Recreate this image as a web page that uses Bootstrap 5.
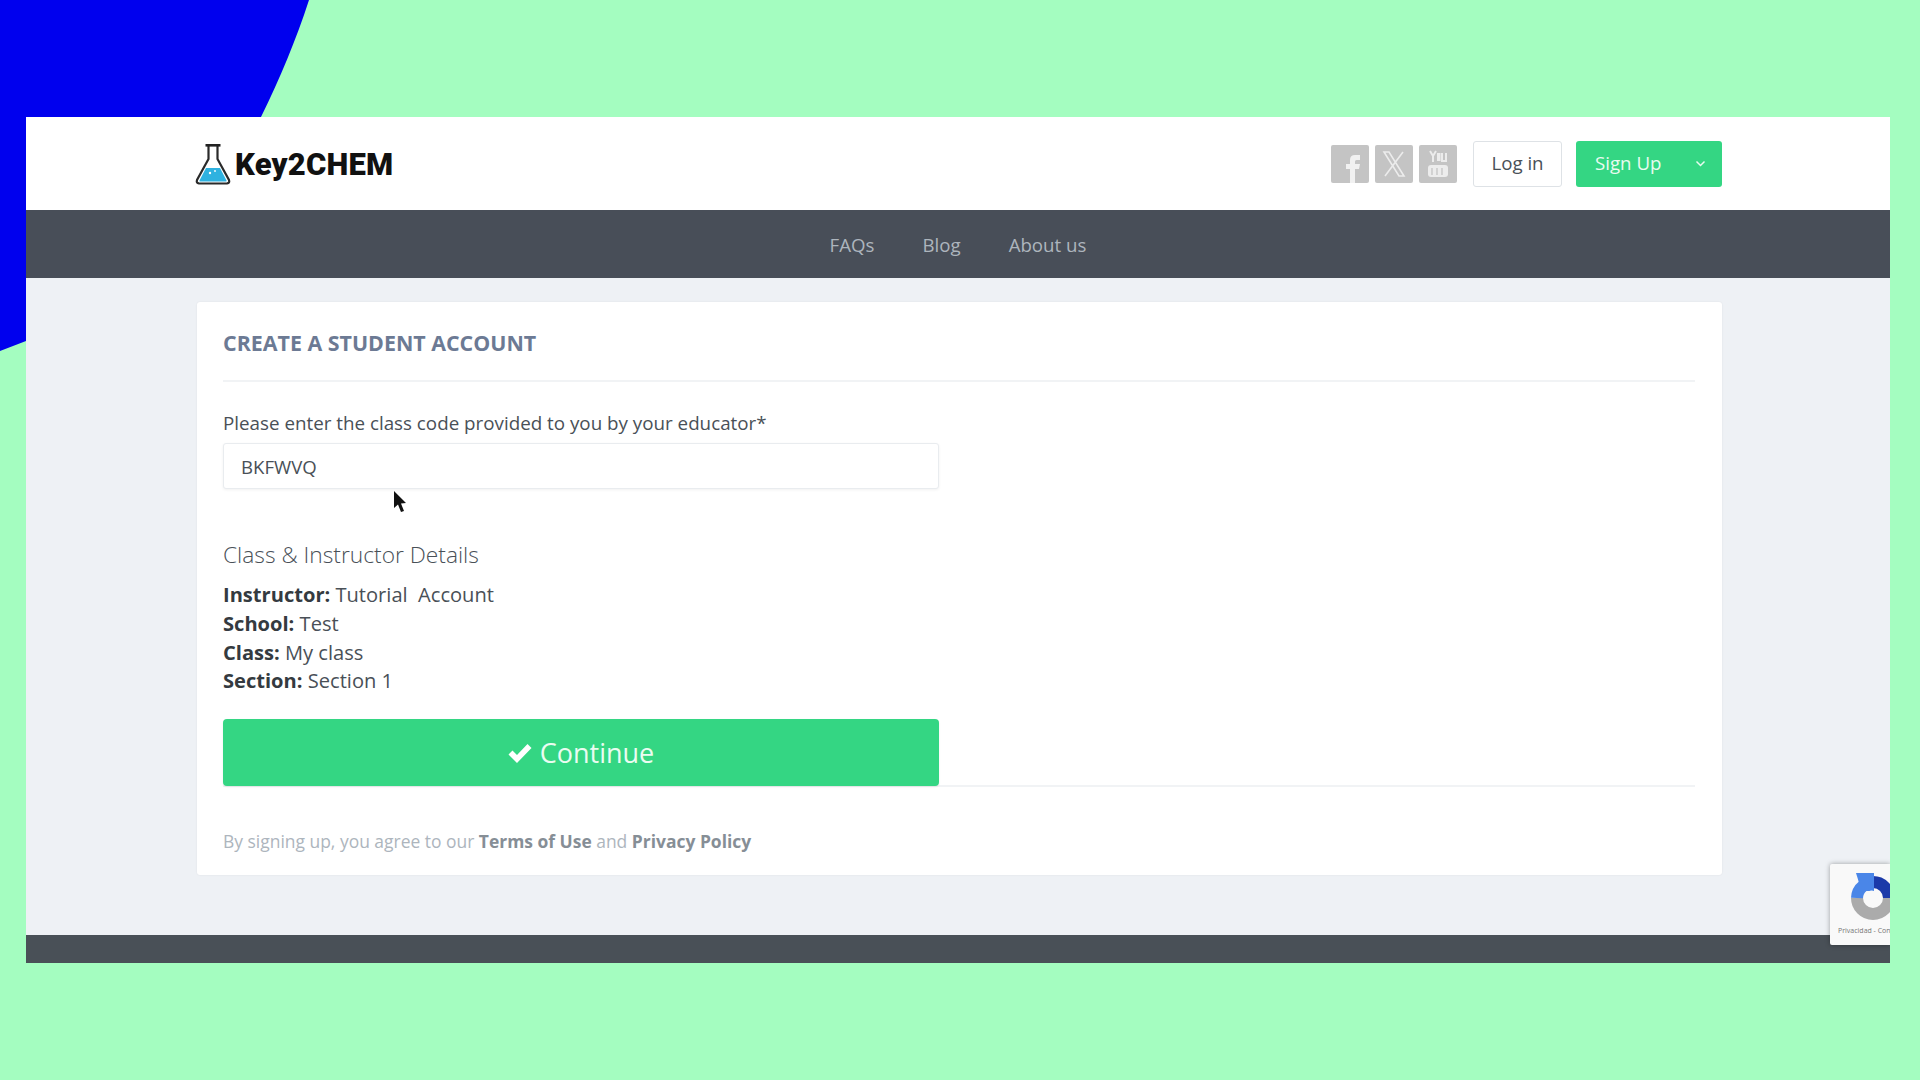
<!DOCTYPE html>
<html lang="en">
<head>
<meta charset="utf-8">
<title>Key2CHEM</title>
<link href="https://cdn.jsdelivr.net/npm/bootstrap@5.3.0/dist/css/bootstrap.min.css" rel="stylesheet">
<style>
html,body{height:100%;}
body{background:#a4fdc0;font-family:"Open Sans","Liberation Sans",sans-serif;color:#495057;overflow:hidden;}
.blue-shape{position:absolute;left:0;top:0;width:320px;height:360px;}
.stage{padding:117px 30px 0 26px;position:relative;}
.app-window{position:relative;height:846px;overflow:hidden;background:#eef1f5;display:flex;flex-direction:column;}
.top-head{height:93px;background:#fff;padding:0 168px 0 169px;}
.brand-name{font-family:Roboto,"Liberation Sans",sans-serif;font-weight:900;font-size:31px;line-height:1;color:#111;letter-spacing:.2px;margin-top:2px;}
.soc-row{gap:6px;margin-right:16px;}
.soc{width:38px;height:38px;background:#c4c4c4;border-radius:2px;display:block;}
.btn-login{height:46px;width:89px;font-size:18.700px;color:#495057;background:#fff;border:1px solid #dee2e6;border-radius:3px;padding:0;}
.btn-sign{height:46px;width:146px;margin-left:14px;font-size:18.700px;background:#34d683;color:#e9fbf0;border:0;border-radius:3px;padding:0 16px 0 19px;}
.top-nav{height:68px;background:#484e58;gap:48px;}
.top-nav a{color:#adb5bd;font-size:18.700px;text-decoration:none;position:relative;top:1px;}
.page-body{flex:1;padding:24px 168px 0 171px;}
.panel{background:#fff;height:573px;padding:0 27px 0 26px;border-radius:3px;box-shadow:0 0 2px rgba(0,0,0,.08);}
.panel-title{font-size:21.400px;font-weight:700;color:#6c7a94;margin:0;height:80px;line-height:82px;border-bottom:2px solid #f1f3f5;}
.field-label{font-size:18.800px;line-height:24px;color:#495057;margin:29px 0 8px;display:block;}
.code-input{width:716px;height:46px;font-size:18.600px;color:#495057;border:1px solid #e9ecef;border-radius:3px;padding:0 17px;box-shadow:0 1px 3px rgba(0,0,0,.06);}
.detail-head{font-size:22.750px;font-weight:300;color:#495057;margin:50px 0 10px;line-height:32px;}
.detail-line{font-size:20.100px;line-height:28.800px;}
.detail-line b{font-weight:700;color:#343a40;}
.form-end{border-bottom:2px solid #f1f3f5;height:68px;margin-top:23px;}
.btn-go{width:716px;height:67px;background:#34d683;color:#eafcf1;border:0;border-radius:4px;font-size:27px;font-weight:400;padding:2px 0 0;box-shadow:0 1px 2px rgba(0,0,0,.08);}
.terms{font-size:17.450px;color:#adb5bd;margin:42px 0 0;line-height:24px;}
.terms b{color:#868e96;font-weight:700;}
.page-foot{height:28px;background:#495057;}
.recaptcha{position:absolute;left:1804px;top:747px;width:60px;height:81px;background:#f9f9f9;box-shadow:0 0 5px rgba(0,0,0,.35);border-radius:2px 0 0 2px;}
.recaptcha span{position:absolute;left:8px;top:61px;font-size:7px;line-height:11px;white-space:nowrap;color:#777;}
.pointer{position:absolute;left:367px;top:374px;width:14px;height:22px;}
</style>
</head>
<body>
<svg class="blue-shape" viewBox="0 0 320 360"><path d="M0 0H309C296 40 280 78 261 117H26V341L0 351Z" fill="#0000ee"/></svg>
<div class="stage">
  <div class="app-window">
    <header class="top-head d-flex align-items-center justify-content-between">
      <div class="d-flex align-items-center gap-1">
        <svg width="36" height="42" viewBox="0 0 36 42">
          <path d="M11 25H25L31.500 37.500Q32 38.500 31 38.500H5Q4 38.500 4.500 37.500Z" fill="#2fb2e0"/>
          <circle cx="15" cy="30" r="1.200" fill="#fff"/><circle cx="20" cy="28" r=".9" fill="#fff"/>
          <path d="M13.500 3V16L2 37Q1 40 4 40.500H32Q35 40 34 37L22.500 16V3" fill="none" stroke="#2a2a2a" stroke-width="2.200"/>
          <rect x="10.500" y="1" width="15" height="2.600" fill="#222"/>
        </svg>
        <span class="brand-name">Key2CHEM</span>
      </div>
      <div class="d-flex align-items-center">
        <div class="d-flex soc-row">
          <svg class="soc" viewBox="0 0 38 38"><path d="M19 38V24H15V19H19V15Q19 10 24 10H29V15H25.500Q24 15 24 16.500V19H29L28 24H24V38Z" fill="#f1f1f1"/></svg>
          <svg class="soc" viewBox="0 0 38 38"><path d="M9 7H14L29 31H24ZM28 7 10 31" fill="none" stroke="#ececec" stroke-width="1.600"/></svg>
          <svg class="soc" viewBox="0 0 38 38"><path d="M11 6 14 11V17M17 6 14 11" fill="none" stroke="#ececec" stroke-width="2"/><rect x="18" y="8" width="3.500" height="8" fill="#ececec"/><path d="M23 8V16H27V8" fill="none" stroke="#ececec" stroke-width="2"/><rect x="9" y="20" width="20" height="12" rx="3" fill="#ececec"/><path d="M13 23V30M18 23V30M23 23V30" stroke="#c4c4c4" stroke-width="1.300"/></svg>
        </div>
        <button class="btn btn-login" type="button">Log in</button>
        <button class="btn btn-sign d-flex align-items-center justify-content-between" type="button">
          <span>Sign Up</span>
          <svg width="11" height="7" viewBox="0 0 11 7"><path d="M1.500 1.500 5.500 5.500 9.500 1.500" fill="none" stroke="#e9fbf0" stroke-width="1.500"/></svg>
        </button>
      </div>
    </header>
    <nav class="top-nav d-flex justify-content-center align-items-center">
      <a href="#">FAQs</a>
      <a href="#">Blog</a>
      <a href="#">About us</a>
    </nav>
    <main class="page-body">
      <section class="panel">
        <h1 class="panel-title">CREATE A STUDENT ACCOUNT</h1>
        <label class="field-label" for="code">Please enter the class code provided to you by your educator*</label>
        <input id="code" class="code-input d-block" type="text" value="BKFWVQ">
        <h2 class="detail-head">Class &amp; Instructor Details</h2>
        <div class="detail-line"><b>Instructor:</b> Tutorial&nbsp; Account</div>
        <div class="detail-line"><b>School:</b> Test</div>
        <div class="detail-line"><b>Class:</b> My class</div>
        <div class="detail-line"><b>Section:</b> Section 1</div>
        <div class="form-end">
          <button class="btn btn-go d-flex align-items-center justify-content-center gap-2" type="button">
            <svg width="24" height="21" viewBox="0 0 24 21"><path d="M.5 11.500 4.500 7.500 9 12 19.500 1 23.500 5 9 20Z" fill="#fff"/></svg>
            <span>Continue</span>
          </button>
        </div>
        <p class="terms">By signing up, you agree to our <b>Terms of Use</b> and <b>Privacy Policy</b></p>
      </section>
    </main>
    <footer class="page-foot"></footer>
    <svg class="pointer" viewBox="0 0 14 22"><path d="M1 0 1 17 5 13.500 8 21 11 20 8 12.500 13 12Z" fill="#111"/></svg>
    <div class="recaptcha">
      <svg width="60" height="60" viewBox="0 0 60 60">
        <path d="M43 18A16 16 0 0 1 59 34" fill="none" stroke="#1c3aa9" stroke-width="12"/>
        <path d="M59 34A16 16 0 0 1 27 34" fill="none" stroke="#ababab" stroke-width="12"/>
        <path d="M27 34A16 16 0 0 1 33 22" fill="none" stroke="#4a86e8" stroke-width="12"/>
        <path d="M26 9H44V27L35 27 30 22Z" fill="#4a86e8"/>
        <path d="M36 31Q40 24 45 28Q52 26 50 32Q54 38 48 40Q44 46 39 41Q34 38 36 31Z" fill="#f9f9f9"/>
      </svg>
      <span>Privacidad - Con</span>
    </div>
  </div>
</div>
<script src="https://cdn.jsdelivr.net/npm/bootstrap@5.3.0/dist/js/bootstrap.bundle.min.js"></script>
</body>
</html>
